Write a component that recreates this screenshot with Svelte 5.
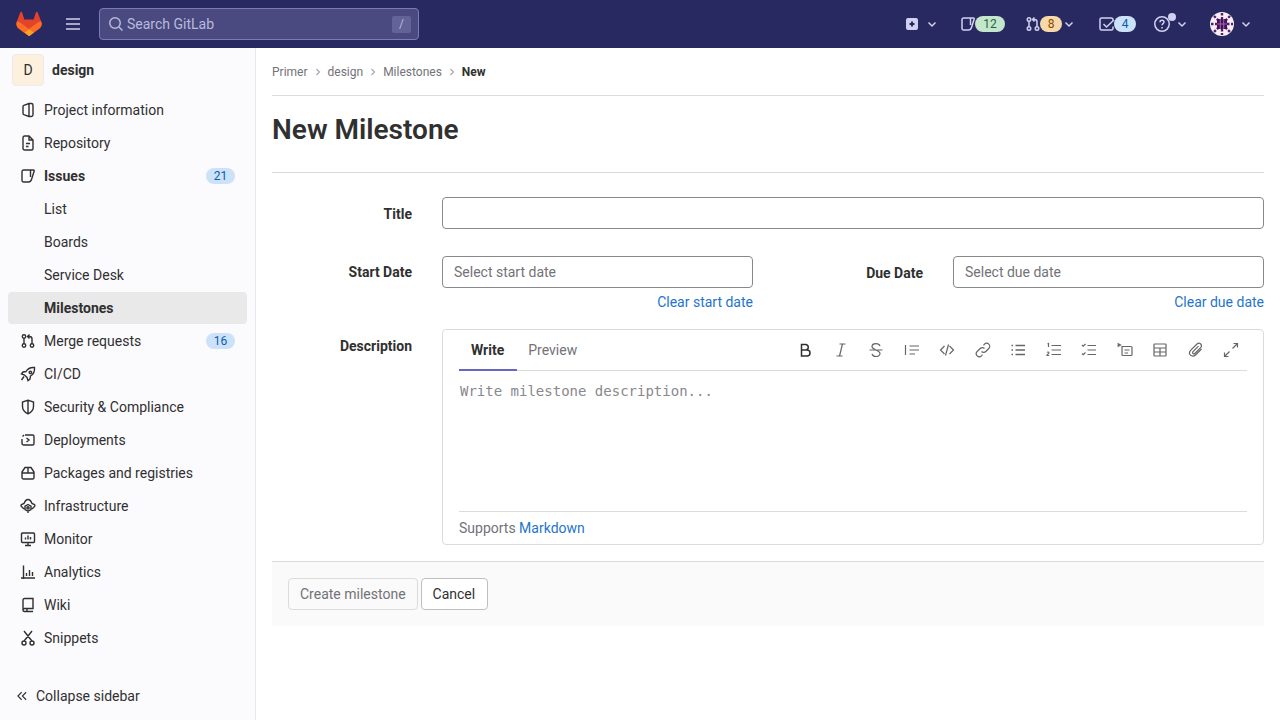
<script lang="ts">
  const icons: Record<string, string> = {
    info: 'M3.800 3.300 9 1.500h2.200c1 0 1.800.7 1.800 1.700v9.600c0 1-.8 1.700-1.800 1.700H9l-5.200-1.800c-.5-.2-.8-.6-.8-1.100V4.400c0-.5.300-.9.800-1.100zM9 1.500v13',
    repo: 'M3 2.500C3 1.700 3.700 1 4.500 1H9l4 4v8.500c0 .8-.7 1.500-1.500 1.500h-7C3.700 15 3 14.300 3 13.500zM9 1v4h4M6 8.500h4M6 11.500h2.500',
    issues: 'M2 3.500C2 2.700 2.700 2 3.500 2h10c.6 0 .9.500.7 1l-2.700 8.500C11 13.100 10 14 8.500 14h-5C2.700 14 2 13.300 2 12.500zM10.500 2v7',
    mr: 'M4 5.200v5.600M12 6v4.800M12 6c0-1.500-1-2.500-2.500-2.500H8M9.500 1.500l-2 2 2 2',
    cicd: 'M14.500 1.500c-4-.4-6.700 1-8.500 4L3 6 1.500 8l3 1 2.500 2.500 1 3 2-1.500.5-3c3-1.800 4.400-4.500 4-8.500zM4 10.500 1.500 14M9.500 5.500a1.200 1.200 0 1 0 2 1.200 1.200 1.200 0 0 0-2-1.200z',
    shield: 'M8 1.200 2.500 3v4.500c0 3.500 2.200 5.800 5.500 7.300 3.300-1.500 5.500-3.800 5.500-7.300V3zM8 1.500v13',
    deploy: 'M5 3h7.500C13.300 3 14 3.700 14 4.500v7c0 .8-.7 1.500-1.500 1.500H4C2.700 13 2 12.300 2 11V7M2.500 4.500 4 3M6.500 6 9 8l-2.500 2',
    pkg: 'M2 7 5 2.500h6L14 7v5.500c0 .8-.7 1.500-1.500 1.500h-9C2.700 14 2 13.300 2 12.500zM2 8h12M8 2.500V8',
    infra: 'M4 11 1.500 8.500C1 8 1 7 1.500 6.500L4 5.500C5 3 6.500 1.500 8 1.500s3 1.500 4 4l2.500 1c.5.5.5 1.500 0 2L12 11M8 6.500l3 1.700v3.300L8 13.200l-3-1.700V8.200zM8 13.200V15',
    monitor: 'M2.500 2h11c.6 0 1 .4 1 1v7.500c0 .6-.4 1-1 1h-11c-.6 0-1-.4-1-1V3c0-.6.4-1 1-1zM5 14.500h6M8 11.500v3M5.500 8.500V6.500M8 8.500V4.500M10.500 8.500V6',
    chart: 'M1 14h14M3.500 1.500V15M6.500 9v3M9.500 6v6M12.500 8v4',
    book: 'M3 3c0-.8.7-1.500 1.500-1.500h8.500V11.500H4.500C3.700 11.500 3 12.200 3 13s.7 1.500 1.500 1.500H13M3 13V3M7 12v3',
    snippet: 'M4 1 11.500 10.500M12 1 4.500 10.500M6 13a2 2 0 1 1-4 0 2 2 0 0 1 4 0zM14 13a2 2 0 1 1-4 0 2 2 0 0 1 4 0z'
  };

  const nav = [
    { label: 'Project information', icon: 'info' },
    { label: 'Repository', icon: 'repo' },
    { label: 'Issues', icon: 'issues', count: 21, bold: true },
    { label: 'List', sub: true },
    { label: 'Boards', sub: true },
    { label: 'Service Desk', sub: true },
    { label: 'Milestones', sub: true, active: true },
    { label: 'Merge requests', icon: 'mr', count: 16 },
    { label: 'CI/CD', icon: 'cicd' },
    { label: 'Security & Compliance', icon: 'shield' },
    { label: 'Deployments', icon: 'deploy' },
    { label: 'Packages and registries', icon: 'pkg' },
    { label: 'Infrastructure', icon: 'infra' },
    { label: 'Monitor', icon: 'monitor' },
    { label: 'Analytics', icon: 'chart' },
    { label: 'Wiki', icon: 'book' },
    { label: 'Snippets', icon: 'snippet' }
  ];

  const tools = [
    'M4.500 2.500H9a2.800 2.800 0 0 1 0 5.500H4.500zM4.500 8H10a3 3 0 0 1 0 6H4.500z',
    'M6.500 2h6M3.500 14h6M9.500 2l-3 12',
    'M1.500 8h13M12 4c-.5-1.500-2-2.300-4-2.300S4 2.800 4 4.500 6 7 8 8c2.500 1 4 1.800 4 3.500S10 14.500 8 14.500s-3.500-.9-4-2.500',
    'M1.500 3v10M5.500 4H15M5.500 8H15M5.500 12H11',
    'M5.500 4 1.500 8l4 4M10.500 4l4 4-4 4M9.500 2.500l-3 11',
    'M6.500 9.500a3 3 0 0 0 4.300 0l3-3a3 3 0 0 0-4.300-4.300L8.500 3.300M9.500 6.500a3 3 0 0 0-4.300 0l-3 3a3 3 0 0 0 4.300 4.300l1-1.100',
    'M5.500 3.500H15M5.500 8H15M5.500 12.500H15M1.500 3.500h1.500M1.500 8h1.500M1.500 12.500h1.500',
    'M5.500 3.500H15M5.500 8H15M5.500 12.500H15M1.500 2l1-.5V5M1 10.500c.5-.8 2-.6 2 .3 0 .8-2 1.500-2 2.700h2.200',
    'M6.500 3.500H15M6.500 8H15M6.500 12.500H15M1 3l1.200 1.200L4.500 2M1 11.500l1.200 1.200 2.300-2.200',
    'M5 4.500h9c.6 0 1 .4 1 1v7c0 .6-.4 1-1 1H6c-.6 0-1-.4-1-1zM7.500 8h5M7.500 11h3.500M1.200 1.800v2.400l2.300-1.200z',
    'M2.500 2h11c.3 0 .5.200.5.500v11c0 .3-.2.500-.5.500h-11c-.3 0-.5-.2-.5-.5v-11c0-.3.200-.5.500-.5zM2 6h12M2 10h12M8 6v8',
    'M13.500 7 7.500 13c-1.500 1.500-3.800 1.500-5 .2S1.200 9.800 2.800 8.200L9 2c1-1 2.700-1 3.700 0s1 2.600 0 3.600L6.800 11.500c-.5.500-1.300.5-1.800 0s-.5-1.300 0-1.800l5.500-5.500',
    'M9.500 6.500 14 2M10.500 1.500H14.500V5.500M6.500 9.500 2 14M1.500 10.500V14.500H5.500'
  ];
</script>

<header class="topbar">
  <svg class="logo" viewBox="0 0 32 32" width="28" height="28" aria-hidden="true">
    <path fill="#e24329" d="m29.800 13-.04-.1-3.900-10.300a1 1 0 0 0-1.900.1l-2.700 8.200H10.700L8 2.700a1 1 0 0 0-1.900-.1L2.200 12.900l-.04.1a7.300 7.300 0 0 0 2.400 8.400l6 4.500 3 2.200 1.800 1.400a1.200 1.200 0 0 0 1.500 0l1.800-1.400 3-2.200 6-4.500a7.300 7.300 0 0 0 2.600-8.400z"/>
    <path fill="#fc6d26" d="m29.800 13-.04-.1a13 13 0 0 0-5.300 2.400L16 21.700l5.400 4.100 6-4.500a7.300 7.300 0 0 0 2.400-8.300z"/>
    <path fill="#fca326" d="m10.600 25.800 3 2.200 1.800 1.400a1.200 1.200 0 0 0 1.500 0l1.800-1.400 3-2.200-5.700-4.100z"/>
    <path fill="#fc6d26" d="M7.500 15.300a13 13 0 0 0-5.300-2.400l-.04.1a7.300 7.300 0 0 0 2.400 8.400l6 4.500 5.400-4.100z"/>
  </svg>
  <svg class="burger" viewBox="0 0 16 16" width="16" height="16" aria-hidden="true">
    <path d="M1 3h14M1 8h14M1 13h14" />
  </svg>
  <div class="search">
    <svg viewBox="0 0 16 16" width="16" height="16" aria-hidden="true">
      <circle cx="7" cy="7" r="5.250" /><path d="m11 11 3.500 3.500" />
    </svg>
    <span>Search GitLab</span>
    <kbd>/</kbd>
  </div>
  <div class="actions">
    <div class="action new">
      <svg viewBox="0 0 16 16" width="16" height="16" aria-hidden="true">
        <rect x="2" y="2" width="12" height="12" rx="2" fill="#d1d0f0" stroke="none" />
        <path d="M8 5.500v5M5.500 8h5" stroke="#292961" stroke-width="2" fill="none" />
      </svg>
      <svg class="chev" viewBox="0 0 16 16" width="16" height="16" aria-hidden="true"><path d="m4.500 6.500 3.500 3.500 3.500-3.500" /></svg>
    </div>
    <div class="action issues">
      <svg viewBox="0 0 16 16" width="16" height="16" aria-hidden="true"><path d={icons.issues} /></svg>
      <span class="pill green">12</span>
    </div>
    <div class="action mrs">
      <svg viewBox="0 0 16 16" width="16" height="16" aria-hidden="true">
        <path d={icons.mr} /><circle cx="4" cy="3.500" r="1.750" /><circle cx="4" cy="12.500" r="1.750" /><circle cx="12" cy="12.500" r="1.750" />
      </svg>
      <span class="pill orange">8</span>
      <svg class="chev" viewBox="0 0 16 16" width="16" height="16" aria-hidden="true"><path d="m4.500 6.500 3.500 3.500 3.500-3.500" /></svg>
    </div>
    <div class="action todos">
      <svg viewBox="0 0 16 16" width="16" height="16" aria-hidden="true"><path d="M14 5.500V3.500C14 2.700 13.300 2 12.500 2h-10C1.700 2 1 2.700 1 3.500v9c0 .8.700 1.500 1.500 1.500h10c.8 0 1.500-.7 1.500-1.500v-2M4.500 8l3 3 7.500-7" /></svg>
      <span class="pill blue">4</span>
    </div>
    <div class="action help">
      <svg viewBox="0 0 16 16" width="16" height="16" aria-hidden="true">
        <circle cx="8" cy="8" r="7.250" /><path d="M6 6.200C6 5 7 4.300 8 4.300s2 .7 2 1.800c0 1.500-2 1.500-2 3.200M8 11v1.500" />
      </svg>
      <span class="dot"></span>
      <svg class="chev" viewBox="0 0 16 16" width="16" height="16" aria-hidden="true"><path d="m4.500 6.500 3.500 3.500 3.500-3.500" /></svg>
    </div>
    <div class="action user">
      <svg class="avatar" viewBox="0 0 24 24" width="24" height="24" aria-hidden="true">
        <circle cx="12" cy="12" r="12" fill="#f6eff5" stroke="none" />
        <path d="M12 1v22M1 12h22M4 4l16 16M20 4 4 20" stroke="#5a1a66" stroke-width="2.400" stroke-dasharray="2.500 1.500" />
        <rect x="7" y="7" width="10" height="10" fill="#47105c" stroke="none" />
        <path d="M10.300 7v10M13.700 7v10M7 12h10" stroke="#a97fb3" stroke-width=".8" />
      </svg>
      <svg class="chev" viewBox="0 0 16 16" width="16" height="16" aria-hidden="true"><path d="m4.500 6.500 3.500 3.500 3.500-3.500" /></svg>
    </div>
  </div>
</header>

<div class="page">
  <aside class="sidebar">
    <div class="context">
      <span class="project-avatar">D</span>
      <span class="project-name">design</span>
    </div>
    <ul class="nav">
      {#each nav as item}
        <li class={['item', item.sub && 'sub', item.active && 'active', item.bold && 'bold']}>
          {#if item.icon}
            <svg viewBox="0 0 16 16" width="16" height="16" aria-hidden="true">
              <path d={icons[item.icon]} />
              {#if item.icon === 'mr'}
                <circle cx="4" cy="3.500" r="1.750" /><circle cx="4" cy="12.500" r="1.750" /><circle cx="12" cy="12.500" r="1.750" />
              {/if}
              {#if item.icon === 'infra'}
                <circle cx="8" cy="9.900" r="1.100" />
              {/if}
            </svg>
          {/if}
          <span class="item-label">{item.label}</span>
          {#if item.count}<span class="count">{item.count}</span>{/if}
        </li>
      {/each}
    </ul>
    <div class="collapse">
      <svg viewBox="0 0 16 16" width="12" height="12" aria-hidden="true"><path d="M7.500 3 2.500 8l5 5M13.500 3l-5 5 5 5" /></svg>
      <span>Collapse sidebar</span>
    </div>
  </aside>

  <main class="content">
    <nav class="crumbs">
      <span>Primer</span>
      <svg viewBox="0 0 8 8" width="8" height="8" aria-hidden="true"><path d="m2.500 1 3 3-3 3" /></svg>
      <span>design</span>
      <svg viewBox="0 0 8 8" width="8" height="8" aria-hidden="true"><path d="m2.500 1 3 3-3 3" /></svg>
      <span>Milestones</span>
      <svg viewBox="0 0 8 8" width="8" height="8" aria-hidden="true"><path d="m2.500 1 3 3-3 3" /></svg>
      <strong>New</strong>
    </nav>

    <h1>New Milestone</h1>

    <form class="form">
      <div class="row">
        <label class="label title-label" for="title">Title</label>
        <input id="title" class="input title" type="text" />
      </div>

      <div class="row dates">
        <div class="date-field">
          <label class="label" for="start">Start Date</label>
          <div class="date-col">
            <input id="start" class="input" type="text" placeholder="Select start date" />
            <a href="#start">Clear start date</a>
          </div>
        </div>
        <div class="date-field">
          <label class="label due" for="due">Due Date</label>
          <div class="date-col">
            <input id="due" class="input" type="text" placeholder="Select due date" />
            <a href="#due">Clear due date</a>
          </div>
        </div>
      </div>

      <div class="row desc">
        <span class="label">Description</span>
        <div class="editor">
          <div class="editor-head">
            <div class="tabs">
              <span class="tab on">Write</span>
              <span class="tab">Preview</span>
            </div>
            <div class="tools">
              {#each tools as d, i}
                <svg class={i === 0 || i === 6 ? 'heavy' : ''} viewBox="0 0 16 16" width="16" height="16" aria-hidden="true"><path {d} /></svg>
              {/each}
            </div>
          </div>
          <div class="editor-body">Write milestone description...</div>
          <div class="editor-foot">Supports <a href="#md">Markdown</a></div>
        </div>
      </div>

      <div class="form-actions">
        <button type="button" class="btn disabled">Create milestone</button>
        <button type="button" class="btn">Cancel</button>
      </div>
    </form>
  </main>
</div>

<style>
  :global(body) {
    margin: 0;
    background: #fff;
    font-family: Roboto, "Noto Sans", sans-serif;
    font-size: 14px;
    color: #303030;
  }
  svg {
    fill: none;
    stroke: currentColor;
    stroke-width: 1.500;
    flex: none;
    display: block;
  }
  .topbar {
    height: 48px;
    background: #292961;
    display: flex;
    align-items: center;
    box-sizing: border-box;
    padding-left: 15px;
    color: #d1d0f0;
  }
  .logo {
    stroke: none;
  }
  .burger {
    margin-left: 22px;
  }
  .search {
    margin-left: 18px;
    width: 320px;
    height: 32px;
    box-sizing: border-box;
    display: flex;
    align-items: center;
    background: #4a4a80;
    border: 1px solid #7b7bb8;
    border-radius: 4px;
    padding: 0 7px 0 8px;
    color: #b9b9dc;
    gap: 3px;
  }
  .search span {
    flex: 1;
  }
  .search kbd {
    width: 19px;
    height: 17px;
    background: #63639a;
    border-radius: 2px;
    font: 12px Roboto, sans-serif;
    text-align: center;
    line-height: 17px;
  }
  .actions {
    margin-left: auto;
    display: flex;
    align-items: center;
  }
  .action {
    display: flex;
    align-items: center;
    position: relative;
  }
  .new .chev { margin-left: 4px; }
  .issues { margin-left: 20px; }
  .mrs { margin-left: 20px; }
  .todos { margin-left: 22px; }
  .help { margin-left: 18px; }
  .user { margin-left: 20px; }
  .user .chev { margin-left: 4px; margin-right: 26px; }
  .mrs .chev { margin-left: -1px; }
  .help .chev { margin-left: 4px; }
  .pill {
    height: 16px;
    border-radius: 8px;
    font-size: 12px;
    line-height: 16px;
    text-align: center;
    margin-left: -1px;
  }
  .green { background: #c3e6cd; color: #24663b; width: 30px; }
  .orange { background: #f5d9a8; color: #8f4700; width: 22px; }
  .blue { background: #cbe2f9; color: #0b5cad; width: 22px; }
  .dot {
    position: absolute;
    left: 14px;
    top: -3px;
    width: 8px;
    height: 8px;
    border-radius: 50%;
    background: #d1d0f0;
  }
  .page {
    display: flex;
    height: 672px;
  }
  .sidebar {
    width: 256px;
    flex: none;
    box-sizing: border-box;
    background: #fbfafd;
    border-right: 1px solid #e8e8e8;
    display: flex;
    flex-direction: column;
    position: relative;
  }
  .context {
    display: flex;
    align-items: center;
    height: 32px;
    padding: 6px 0 6px 12px;
    gap: 8px;
  }
  .project-avatar {
    width: 32px;
    height: 32px;
    box-sizing: border-box;
    border: 1px solid #ececec;
    background: #fdf1dd;
    border-radius: 4px;
    display: flex;
    align-items: center;
    justify-content: center;
    color: #303030;
  }
  .project-name {
    font-weight: 700;
  }
  .nav {
    list-style: none;
    margin: 2px 0 0;
    padding: 0;
  }
  .item {
    height: 32px;
    margin: 0 8px 1px;
    padding: 0 12px;
    border-radius: 4px;
    display: flex;
    align-items: center;
    gap: 8px;
    color: #303030;
  }
  .item svg {
    stroke-width: 1.400;
  }
  .item-label {
    flex: 1;
  }
  .item.sub {
    padding-left: 36px;
  }
  .bold .item-label, .active .item-label {
    font-weight: 700;
  }
  .active {
    background: #e9e9e9;
  }
  .count {
    width: 29px;
    height: 16px;
    border-radius: 8px;
    background: #cbe2f9;
    color: #0b5cad;
    font-size: 12px;
    line-height: 16px;
    text-align: center;
  }
  .collapse {
    margin-top: auto;
    height: 48px;
    display: flex;
    align-items: center;
    gap: 8px;
    padding-left: 16px;
    color: #303030;
  }
  .content {
    flex: 1;
    padding: 0 16px;
    min-width: 0;
  }
  .crumbs {
    height: 47px;
    border-bottom: 1px solid #dbdbdb;
    display: flex;
    align-items: center;
    font-size: 12px;
    color: #737278;
  }
  .crumbs svg {
    margin: 0 6px;
    color: #a4a3a8;
    stroke-width: 1.100;
  }
  .crumbs strong {
    color: #303030;
  }
  h1 {
    margin: 0;
    height: 76px;
    border-bottom: 1px solid #dbdbdb;
    font-size: 28px;
    font-weight: 600;
    line-height: 67px;
    color: #303030;
  }
  .row {
    display: flex;
    align-items: center;
  }
  .form > .row:first-child {
    margin-top: 24px;
    height: 32px;
  }
  .label {
    width: 140px;
    flex: none;
    box-sizing: border-box;
    text-align: right;
    font-weight: 700;
    color: #303030;
    margin-right: 30px;
  }
  .title-label {
    padding-top: 2px;
  }
  .input {
    box-sizing: border-box;
    height: 32px;
    border: 1px solid #89888d;
    border-radius: 4px;
    padding: 0 11px;
    font: 14px Roboto, sans-serif;
    color: #303030;
    background: #fff;
    width: 100%;
    outline: none;
  }
  .input::placeholder {
    color: #737278;
    opacity: 1;
  }
  .title {
    flex: 1;
    min-width: 0;
  }
  .dates {
    margin-top: 27px;
    align-items: flex-start;
    gap: 0;
    justify-content: space-between;
  }
  .date-field {
    display: flex;
    align-items: flex-start;
    width: 481px;
  }
  .date-field:last-child {
    width: 398px;
  }
  .date-field .label {
    line-height: 32px;
  }
  .date-field .due {
    width: 57px;
    white-space: nowrap;
    margin-right: 30px;
    display: flex;
    justify-content: flex-end;
    padding-top: 1px;
  }
  .date-col {
    width: 311px;
    flex: none;
    display: flex;
    flex-direction: column;
    align-items: flex-end;
  }
  .date-col a {
    margin-top: 4px;
    line-height: 20px;
  }
  a {
    color: #1f75cb;
    text-decoration: none;
  }
  .desc {
    margin-top: 17px;
    align-items: flex-start;
  }
  .desc .label {
    padding-top: 9px;
  }
  .editor {
    flex: 1;
    min-width: 0;
    box-sizing: border-box;
    height: 216px;
    border: 1px solid #dbdbdb;
    border-radius: 4px;
    padding: 0 16px;
    display: flex;
    flex-direction: column;
  }
  .editor-head {
    height: 41px;
    box-sizing: border-box;
    border-bottom: 1px solid #dbdbdb;
    display: flex;
    justify-content: space-between;
    align-items: center;
  }
  .tabs {
    display: flex;
    height: 41px;
  }
  .tab {
    padding: 0 11px;
    line-height: 40px;
    color: #737278;
    box-sizing: border-box;
    height: 41px;
  }
  .tab.on {
    padding: 0 13px 0 12px;
    font-weight: 700;
    color: #303030;
    border-bottom: 2px solid #6666c4;
  }
  .tools {
    display: flex;
    gap: 19.500px;
    color: #666;
    padding-right: 8px;
  }
  .tools svg {
    stroke-width: 1.200;
  }
  .tools svg.heavy {
    stroke-width: 1.500;
  }
  .tools svg:first-child {
    color: #303030;
  }
  .editor-body {
    flex: 1;
    padding: 12px 0 0 1px;
    font: 14px/17px "DejaVu Sans Mono", monospace;
    color: #89888d;
  }
  .editor-foot {
    height: 33px;
    box-sizing: border-box;
    border-top: 1px solid #dbdbdb;
    line-height: 32px;
    color: #737278;
  }
  .form-actions {
    margin-top: 16px;
    height: 65px;
    background: #fafafa;
    border-top: 1px solid #dbdbdb;
    padding: 16px;
    box-sizing: border-box;
    display: flex;
    gap: 3px;
  }
  .btn {
    height: 32px;
    box-sizing: border-box;
    padding: 0 12px 0 11px;
    border: 1px solid #bfbfbf;
    border-radius: 4px;
    background: #fff;
    font: 14px Roboto, sans-serif;
    color: #303030;
  }
  .btn.disabled {
    padding: 0 11px;
    background: #fafafa;
    color: #737278;
    border-color: #dbdbdb;
  }
</style>
